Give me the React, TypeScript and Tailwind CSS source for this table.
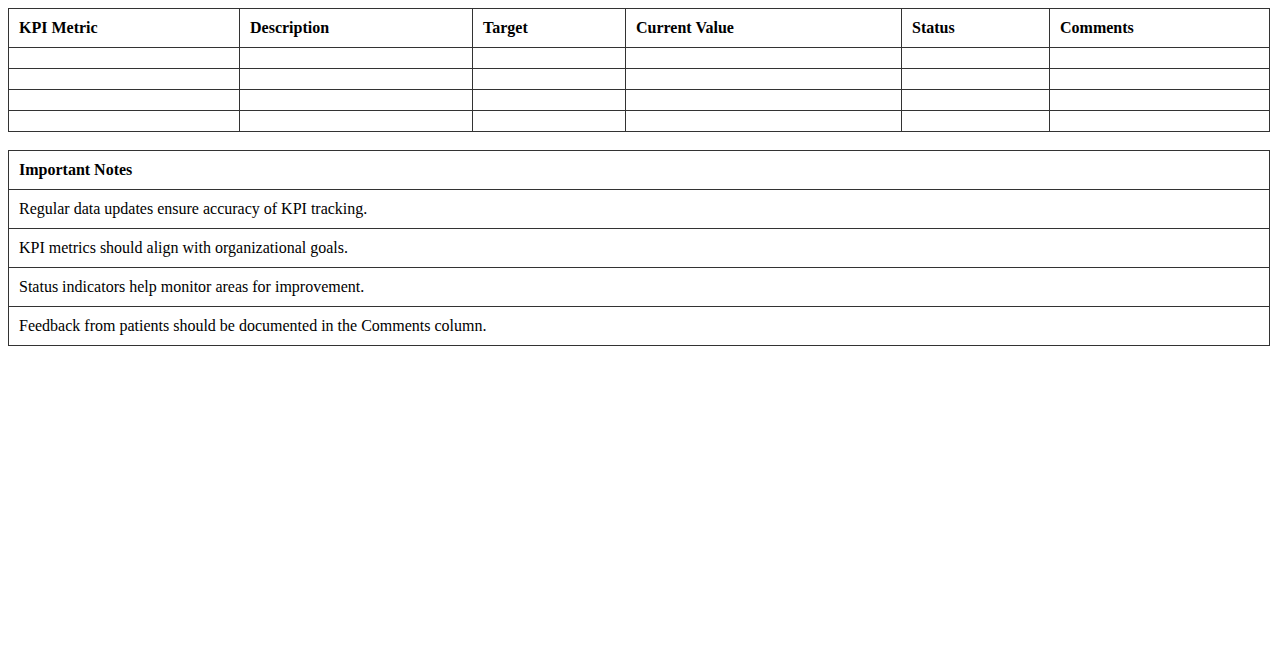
import React from 'react';

const columns = ['KPI Metric', 'Description', 'Target', 'Current Value', 'Status', 'Comments'];
const widths = ['w-[231px]', 'w-[233px]', 'w-[153px]', 'w-[276px]', 'w-[148px]', 'w-[220px]'];

const notes = [
  'Regular data updates ensure accuracy of KPI tracking.',
  'KPI metrics should align with organizational goals.',
  'Status indicators help monitor areas for improvement.',
  'Feedback from patients should be documented in the Comments column.',
];

export default function App() {
  return (
    <div className="min-h-[650px] bg-white p-2 text-black font-['Liberation_Serif','Times_New_Roman',serif] text-base leading-[18px]">
      <table className="w-full table-fixed border-collapse border border-[#333]">
        <colgroup>
          {widths.map((w, i) => (
            <col key={i} className={w} />
          ))}
        </colgroup>
        <thead>
          <tr>
            {columns.map((c) => (
              <th key={c} className="border border-[#333] p-[10px] text-left font-bold">
                {c}
              </th>
            ))}
          </tr>
        </thead>
        <tbody>
          {[0, 1, 2, 3].map((r) => (
            <tr key={r}>
              {columns.map((c) => (
                <td key={c} className="border border-[#333] p-[10px]" />
              ))}
            </tr>
          ))}
        </tbody>
      </table>

      <table className="mt-[18px] w-full border-collapse border border-[#333]">
        <thead>
          <tr>
            <th className="border border-[#333] p-[10px] text-left font-bold">Important Notes</th>
          </tr>
        </thead>
        <tbody>
          {notes.map((n) => (
            <tr key={n}>
              <td className="border border-[#333] p-[10px]">{n}</td>
            </tr>
          ))}
        </tbody>
      </table>
    </div>
  );
}
